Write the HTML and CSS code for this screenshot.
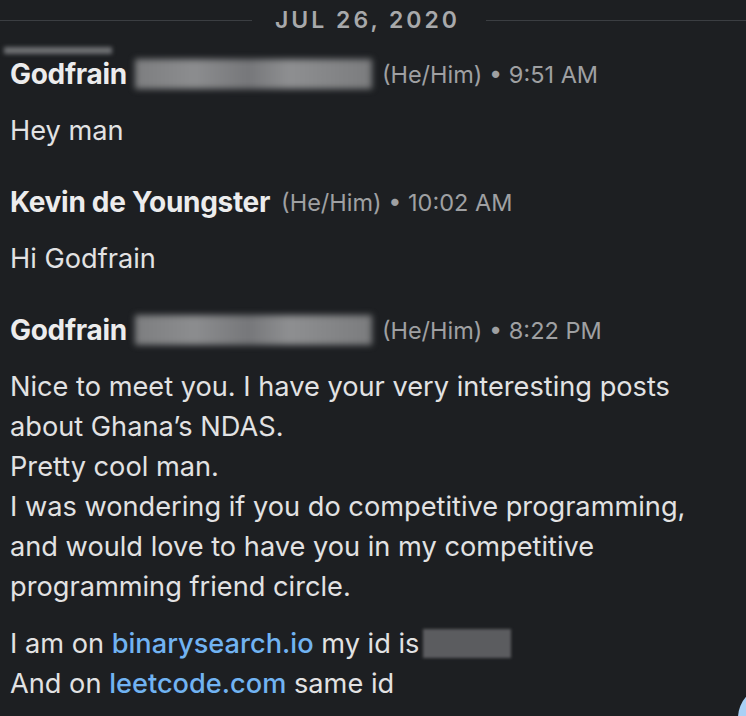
FILE: index.html
```html
<!DOCTYPE html>
<html lang="en">
<head>
  <meta charset="UTF-8" />
  <meta name="viewport" content="width=device-width, initial-scale=1.0"/>
  <title>Messages</title>
  <link rel="stylesheet" href="styles.css">
</head>
<body>

  <div class="thread">
    <div class="date-divider">
      <span class="rule rule-left"></span>
      <span class="date">JUL 26, 2020</span>
      <span class="rule"></span>
    </div>

    <div class="ghost"></div>

    <div class="message">
      <div class="meta">
        <span class="name">Godfrain</span>
        <span class="redacted redacted-name"></span>
        <span class="info">(He/Him) • 9:51 AM</span>
      </div>
      <div class="body">
        <p>Hey man</p>
      </div>
    </div>

    <div class="message">
      <div class="meta">
        <span class="name">Kevin de Youngster</span>
        <span class="info">(He/Him) • 10:02 AM</span>
      </div>
      <div class="body">
        <p>Hi Godfrain</p>
      </div>
    </div>

    <div class="message">
      <div class="meta">
        <span class="name">Godfrain</span>
        <span class="redacted redacted-name"></span>
        <span class="info">(He/Him) • 8:22 PM</span>
      </div>
      <div class="body">
        <p>Nice to meet you. I have your very interesting posts<br>
        about Ghana’s NDAS.<br>
        Pretty cool man.<br>
        I was wondering if you do competitive programming,<br>
        and would love to have you in my competitive<br>
        programming friend circle.</p>
        <p>I am on <a href="#">binarysearch.io</a> my id is<span class="redacted redacted-id"></span><br>
        And on <a href="#">leetcode.com</a> same id</p>
      </div>
    </div>
  </div>

  <div class="bubble-edge">
    <div class="bubble"></div>
  </div>

</body>
</html>
```

FILE: styles.css
```css
* {
  box-sizing: border-box;
}

body {
  margin: 0;
  font-family: Inter, "Liberation Sans", sans-serif;
  background-color: #1d1f22;
  color: #e2e2e3;
  height: 716px;
  overflow: hidden;
  position: relative;
}

.thread {
  padding: 0 0 0 10px;
}

/* Séparateur de date */
.date-divider {
  display: flex;
  align-items: center;
  height: 40px;
  margin-left: -10px;
}

.rule {
  flex: 1;
  height: 1px;
  background-color: #3b3e42;
}

.rule-left {
  flex: 0 0 252px;
}

.date {
  font-size: 23px;
  font-weight: 600;
  letter-spacing: 3px;
  color: #a8a9ab;
  margin: 0 26px 0 23px;
}

.ghost {
  width: 108px;
  height: 7px;
  margin: 7px 0 0 -6px;
  background-color: #6e7073;
  filter: blur(2px);
}

.message + .message {
  margin-top: 31px;
}

.meta {
  display: flex;
  align-items: center;
  height: 40px;
}

.name {
  font-size: 28px;
  font-weight: 700;
  color: #ececed;
  letter-spacing: -0.3px;
}

.info {
  font-size: 23.5px;
  color: #9fa0a2;
  margin-left: 11px;
}

.redacted {
  display: inline-block;
  filter: blur(3px);
}

.redacted-name {
  width: 237px;
  height: 30px;
  margin-left: 8px;
  background: linear-gradient(90deg, #7d7e80 0%, #8c8d8f 25%, #76777a 48%, #8e8f91 65%, #7b7c7e 100%);
}

.redacted-name + .info {
  margin-left: 10px;
}

.redacted-id {
  width: 88px;
  height: 29px;
  margin-left: 4px;
  vertical-align: -5px;
  background-color: #5b5c5f;
  filter: blur(1.5px);
}

.body {
  margin-top: 17px;
}

.body p {
  margin: 0;
  font-size: 27.2px;
  line-height: 40px;
  color: #e2e2e3;
}

.body p + p {
  margin-top: 17px;
}

.body a {
  color: #71b3f2;
  font-weight: 500;
  text-decoration: none;
}

/* Bouton flottant coupé au bord */
.bubble-edge {
  position: absolute;
  left: 738px;
  top: 686px;
  width: 8px;
  height: 30px;
  overflow: hidden;
}

.bubble {
  width: 64px;
  height: 64px;
  border-radius: 50%;
  background-color: #a9d0f5;
}
```
